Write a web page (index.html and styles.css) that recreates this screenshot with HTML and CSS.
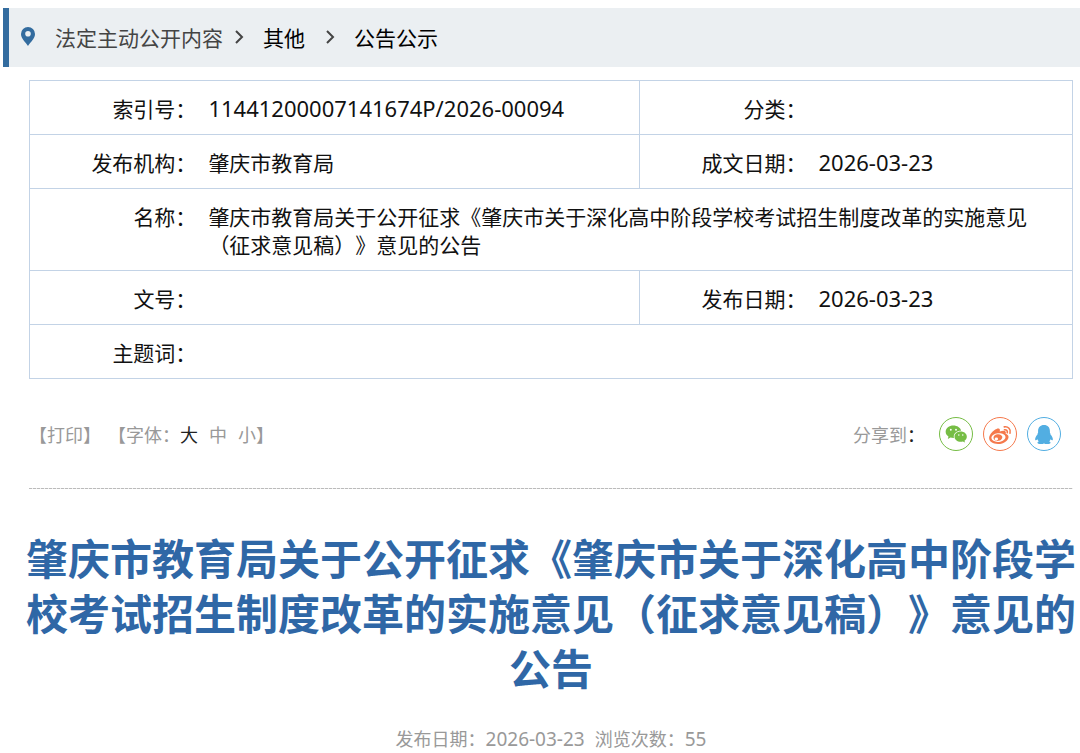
FILE: index.html
```html
<!DOCTYPE html>
<html lang="zh-CN">
<head>
<meta charset="utf-8">
<meta name="viewport" content="width=device-width, initial-scale=1">
<title>肇庆市教育局公告</title>
<link rel="stylesheet" href="styles.css">
</head>
<body>
<nav class="crumbs" aria-label="当前位置">
  <svg class="pin" viewBox="0 0 14 19" aria-hidden="true"><path fill-rule="evenodd" d="M7 0a7 7 0 0 0-7 7c0 4.500 4.500 8 7 12 2.500-4 7-7.500 7-12a7 7 0 0 0-7-7zm0 4a2.800 2.800 0 1 1 0 5.600 2.800 2.800 0 0 1 0-5.600z"/></svg>
  <a class="crumb crumb-root" href="#">法定主动公开内容</a>
  <svg class="chevron" viewBox="0 0 10 14" aria-hidden="true"><path d="M2 1l6 6-6 6"/></svg>
  <a class="crumb" href="#">其他</a>
  <svg class="chevron chevron-wide" viewBox="0 0 10 14" aria-hidden="true"><path d="M2 1l6 6-6 6"/></svg>
  <a class="crumb" href="#">公告公示</a>
</nav>
<main>
  <div class="content">
    <table class="info">
      <colgroup><col class="col-label"><col class="col-main"><col class="col-label"><col></colgroup>
      <tr><th scope="row">索引号：</th><td class="end"><span class="num">11441200007141674P/2026-00094</span></td><th scope="row">分类：</th><td></td></tr>
      <tr><th scope="row">发布机构：</th><td class="end">肇庆市教育局</td><th scope="row">成文日期：</th><td><span class="num">2026-03-23</span></td></tr>
      <tr><th scope="row">名称：</th><td class="name" colspan="3">肇庆市教育局关于公开征求《肇庆市关于深化高中阶段学校考试招生制度改革的实施意见（征求意见稿）》意见的公告</td></tr>
      <tr><th scope="row">文号：</th><td class="end"></td><th scope="row">发布日期：</th><td><span class="num">2026-03-23</span></td></tr>
      <tr><th scope="row">主题词：</th><td colspan="3"></td></tr>
    </table>
    <div class="tools">
      <button class="tool" type="button">【打印】</button>
      <div class="sizes">
        <span>【字体：</span>
        <button class="tool tool-on" type="button">大</button>
        <button class="tool" type="button">中</button>
        <span><button class="tool" type="button">小</button>】</span>
      </div>
      <div class="share">
        <span>分享到<span class="colon">：</span></span>
        <a class="share-link wechat" href="#" aria-label="微信"><svg viewBox="0 0 34 34"><path d="M14.200 8C9.700 8 6 10.900 6 14.600c0 2.100 1.200 3.900 3 5.100L8.300 22.200l2.900-1.500c1 .3 2 .5 3.100.5h.5a6 6 0 0 1-.2-1.500c0-3.500 3.400-6.200 7.500-6.200h.3C21.700 10.300 18.300 8 14.200 8z"/><path d="M22 14.400c-3.700 0-6.600 2.400-6.600 5.400s2.900 5.400 6.600 5.400c.8 0 1.600-.1 2.300-.3l2.300 1.200-.6-2c1.500-1 2.500-2.500 2.500-4.300 0-3-2.900-5.400-6.500-5.400z"/><g class="hole"><circle cx="11.500" cy="12.500" r="1"/><circle cx="17" cy="12.500" r="1"/><circle cx="20" cy="18" r=".8"/><circle cx="24.200" cy="18" r=".8"/></g></svg></a>
        <a class="share-link weibo" href="#" aria-label="微博"><svg viewBox="2 2 30 30"><path fill-rule="evenodd" d="M13.800 12.200c1.500-.6 2.900-.3 3.100.9.100.5 0 1-.2 1.600 2.800-1.100 5.200-1.100 5.700.4.200.5.100 1-.1 1.600 1.600.5 2.700 1.500 2.700 3 0 3.200-4.400 6.700-9.800 6.700-4.900 0-8.400-2.300-8.400-5.600 0-3.200 3.800-7.500 7-8.600zM15 16.300c-3.700.4-6.300 2.400-6 4.800.3 2.300 3.300 3.700 7 3.300s6.400-2.500 6.100-4.800c-.3-2.300-3.400-3.700-7.100-3.300z"/><path fill-rule="evenodd" d="M14.300 17.300c-2.300.4-3.800 2.200-3.300 4 .5 1.700 2.600 2.600 4.900 2.100s3.700-2.300 3.200-4-2.500-2.600-4.800-2.100zm-.7 3a1.600 1.400 0 1 1 0 2.800 1.600 1.400 0 0 1 0-2.800z"/><path class="line" d="M21 10.300c3.500-.7 6.500 2.200 5.400 5.900M21.200 13c1.700-.3 3.100 1 2.600 2.800"/></svg></a>
        <a class="share-link qq" href="#" aria-label="QQ"><svg viewBox="0 0 34 34"><path d="M17 7.500c-4 0-6.300 2.700-6.300 6.500v1.600c-.6.600-.8 1.300-.6 2-1.700 1.800-2.700 3.900-2.500 5.400.2 1.200 1.300.9 2.400-.5.300 1 .8 1.600 1.500 2.300-1 .4-1.500.9-1.500 1.500 0 1 1.600 1.400 3.500 1.400 1.500 0 2.900-.4 3.500-1 .6.600 2 1 3.500 1 1.900 0 3.500-.4 3.500-1.400 0-.6-.5-1.100-1.500-1.500.7-.7 1.200-1.300 1.500-2.300 1.100 1.400 2.200 1.700 2.400.5.200-1.500-.8-3.600-2.500-5.400.2-.7 0-1.400-.6-2V14c0-3.800-2.300-6.500-6.300-6.500z"/></svg></a>
      </div>
    </div>
  </div>
  <header class="article-head">
    <h1 class="title">肇庆市教育局关于公开征求《肇庆市关于深化高中阶段学校考试招生制度改革的实施意见（征求意见稿）》意见的公告</h1>
    <p class="meta"><span>发布日期：<span class="meta-num">2026-03-23</span></span><span>浏览次数：<span class="meta-num">55</span></span></p>
  </header>
</main>
</body>
</html>
```
FILE: styles.css
```css
* { box-sizing: border-box; }
body {
  margin: 0;
  background: #fff;
  color: #111;
  font: 21px/28px "Noto Sans CJK SC", sans-serif;
  text-spacing-trim: space-all;
}
a { color: inherit; text-decoration: none; }
button {
  border: 0;
  padding: 0;
  background: none;
  color: inherit;
  font: inherit;
  text-spacing-trim: inherit;
  cursor: pointer;
}
.crumbs {
  display: flex;
  align-items: center;
  min-height: 59px;
  margin: 8px 0 13px 3px;
  padding: 0 0 2px 12px;
  border-left: 6px solid #336c9f;
  background: #ebeff2;
}
.pin { width: 14px; height: 19px; margin-right: 20px; fill: #336c9f; }
.crumb { color: #000; }
.crumb-root { color: #444; }
.chevron {
  width: 10px;
  height: 14px;
  margin: 0 19px 0 11px;
  fill: none;
  stroke: #444;
  stroke-width: 2;
}
.chevron-wide { margin: 0 19px 0 20px; }
.content { margin: 0 7px 0 29px; }
.info {
  width: 100%;
  table-layout: fixed;
  border-collapse: collapse;
  border: 1px solid #c3d3e6;
}
.col-label { width: 16%; }
.col-main { width: 42.500%; }
.info tr { border-top: 1px solid #c3d3e6; }
.info th { padding: 13px 0 12px; font-weight: 400; text-align: right; vertical-align: top; }
.info td { padding: 13px 12px 12px; vertical-align: top; }
.info .name { padding-right: 36px; }
.info .end { border-right: 1px solid #c3d3e6; }
.num, .meta-num { font-family: "Noto Sans", sans-serif; line-height: 1; }
.num { font-size: 22px; }
.tools {
  display: flex;
  align-items: center;
  gap: 7px;
  padding: 38px 12px 38px 0;
  background: repeating-linear-gradient(90deg, #bbb 0 3px, #eee 3px 4px) bottom / 100% 1px no-repeat;
  color: #999;
  font-size: 18px;
}
.sizes { display: flex; gap: 11px; }
.sizes .tool-on { margin-left: -11px; color: #222; }
.share { display: flex; align-items: center; gap: 10px; margin-left: auto; }
.colon { margin-right: 4px; color: #222; }
.share-link { width: 34px; height: 34px; border: 1px solid; border-radius: 50%; }
.share-link svg { display: block; width: 100%; height: 100%; fill: currentColor; }
.wechat { color: #76bd45; }
.weibo { color: #f5794c; }
.qq { color: #52aee2; }
.hole { fill: #fff; }
.line { fill: none; stroke: currentColor; stroke-width: 1.500; stroke-linecap: round; }
.article-head { padding: 40px 2px 0 24px; text-align: center; }
.title { margin: 0; color: #2f67a6; font-size: 42px; font-weight: 700; line-height: 55px; }
.meta { display: flex; justify-content: center; gap: 10px; margin: 30px 0 0; color: #999; font-size: 18px; }
.meta-num { font-size: 19px; }
```
